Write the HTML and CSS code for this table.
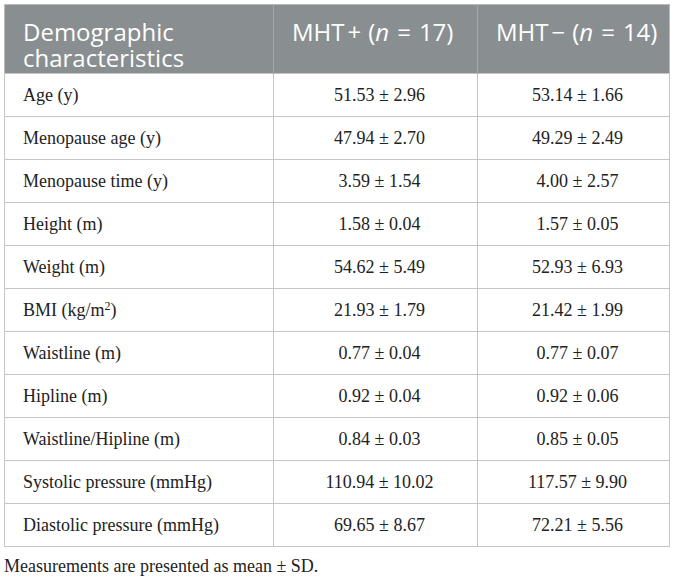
FILE: index.html
```html
<!DOCTYPE html>
<html>
<head>
<meta charset="utf-8">
<link rel="stylesheet" href="styles.css">
</head>
<body>
<div class="wrap">
<table class="data">
<colgroup><col class="c1"><col class="c2"><col class="c3"></colgroup>
<thead>
<tr><th>Demographic<br>characteristics</th><th>MHT<span class="op">+</span>(<i>n</i><span class="op">=</span>17)</th><th>MHT<span class="op">−</span>(<i>n</i><span class="op">=</span>14)</th></tr>
</thead>
<tbody>
<tr><td>Age (y)</td><td>51.53 ± 2.96</td><td>53.14 ± 1.66</td></tr>
<tr><td>Menopause age (y)</td><td>47.94 ± 2.70</td><td>49.29 ± 2.49</td></tr>
<tr><td>Menopause time (y)</td><td>3.59 ± 1.54</td><td>4.00 ± 2.57</td></tr>
<tr><td>Height (m)</td><td>1.58 ± 0.04</td><td>1.57 ± 0.05</td></tr>
<tr><td>Weight (m)</td><td>54.62 ± 5.49</td><td>52.93 ± 6.93</td></tr>
<tr><td>BMI (kg/m<sup>2</sup>)</td><td>21.93 ± 1.79</td><td>21.42 ± 1.99</td></tr>
<tr><td>Waistline (m)</td><td>0.77 ± 0.04</td><td>0.77 ± 0.07</td></tr>
<tr><td>Hipline (m)</td><td>0.92 ± 0.04</td><td>0.92 ± 0.06</td></tr>
<tr><td>Waistline/Hipline (m)</td><td>0.84 ± 0.03</td><td>0.85 ± 0.05</td></tr>
<tr><td>Systolic pressure (mmHg)</td><td>110.94 ± 10.02</td><td>117.57 ± 9.90</td></tr>
<tr><td>Diastolic pressure (mmHg)</td><td>69.65 ± 8.67</td><td>72.21 ± 5.56</td></tr>
</tbody>
</table>
<p class="note">Measurements are presented as mean ± SD.</p>
</div>
</body>
</html>
```
FILE: styles.css
```css
html, body { margin: 0; padding: 0; background: #fff; }
.wrap { padding: 4px 0 0 4px; }
.data {
  border-collapse: collapse;
  table-layout: fixed;
  width: 665px;
  border: 1px solid #b9bcbd;
}
.c1 { width: 269px; }
.c2 { width: 204px; }
.c3 { width: 192px; }
.data th {
  background: #898e91;
  color: #fff;
  font-family: "Open Sans", "Noto Sans", sans-serif;
  font-weight: 400;
  font-size: 24px;
  line-height: 26px;
  text-align: left;
  vertical-align: top;
  height: 69px;
  box-sizing: border-box;
  padding: 14px 4px 0 18px;
  border-left: 1px solid #a3a8aa;
  white-space: nowrap;
}
.data th:first-child { border-left: none; }
.data th .op { margin: 0 7px 0 3px; }
.data th i + .op { margin: 0 8px; }
.data td {
  font-family: "Liberation Serif", "Times New Roman", serif;
  font-size: 18px;
  color: #222;
  height: 43px;
  box-sizing: border-box;
  padding: 0 10px 0 18px;
  border: 1px solid #c3c5c6;
  text-align: center;
  vertical-align: middle;
}
.data td:first-child { text-align: left; }
.data sup { font-size: 12px; line-height: 0; vertical-align: 6px; }
.note {
  margin: 9px 0 0 0;
  font-family: "Liberation Serif", "Times New Roman", serif;
  font-size: 18px;
  color: #222;
}
```
